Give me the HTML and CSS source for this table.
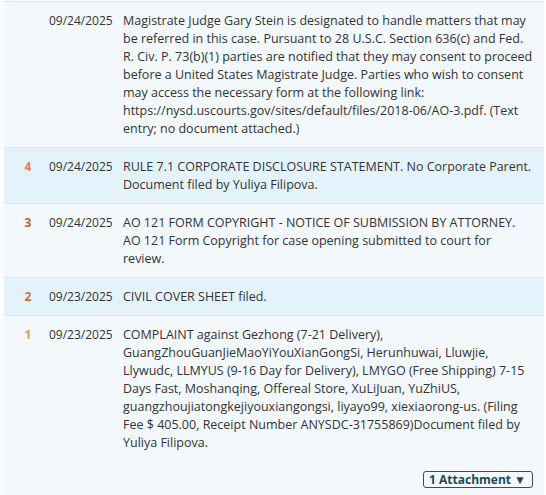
FILE: index.html
```html
<!DOCTYPE html>
<html lang="en">
<head>
    <meta charset="UTF-8">
    <meta name="viewport" content="width=device-width, initial-scale=1.0">
    <title>Docket Entries</title>
    <link rel="stylesheet" href="styles.css">
</head>
<body>
    <div class="docket">
        <div class="entry">
            <div class="entry-num"></div>
            <div class="entry-date">09/24/2025</div>
            <div class="entry-text">
                <p>Magistrate Judge Gary Stein is designated to handle matters that may be referred in this case. Pursuant to 28 U.S.C. Section 636(c) and Fed.<br>R. Civ. P. 73(b)(1) parties are notified that they may consent to proceed before a United States Magistrate Judge. Parties who wish to consent may access the necessary form at the following link: https://nysd.uscourts.gov/sites/default/files/2018-06/AO-3.pdf. (Text entry; no document attached.)</p>
            </div>
        </div>

        <div class="entry alt">
            <div class="entry-num num-4">4</div>
            <div class="entry-date">09/24/2025</div>
            <div class="entry-text">
                <p>RULE 7.1 CORPORATE DISCLOSURE STATEMENT. No Corporate Parent. Document filed by Yuliya Filipova.</p>
            </div>
        </div>

        <div class="entry">
            <div class="entry-num num-3">3</div>
            <div class="entry-date">09/24/2025</div>
            <div class="entry-text">
                <p>AO 121 FORM COPYRIGHT - NOTICE OF SUBMISSION BY ATTORNEY. AO 121 Form Copyright for case opening submitted to court for review.</p>
            </div>
        </div>

        <div class="entry alt">
            <div class="entry-num num-2">2</div>
            <div class="entry-date">09/23/2025</div>
            <div class="entry-text">
                <p>CIVIL COVER SHEET filed.</p>
            </div>
        </div>

        <div class="entry">
            <div class="entry-num num-1">1</div>
            <div class="entry-date">09/23/2025</div>
            <div class="entry-text">
                <p>COMPLAINT against Gezhong (7-21 Delivery), GuangZhouGuanJieMaoYiYouXianGongSi, Herunhuwai, Lluwjie, Llywudc, LLMYUS (9-16 Day for Delivery), LMYGO (Free Shipping) 7-15 Days Fast, Moshanqing, Offereal Store, XuLiJuan, YuZhiUS, guangzhoujiatongkejiyouxiangongsi, liyayo99, xiexiaorong-us. (Filing Fee $ 405.00, Receipt Number ANYSDC-31755869)Document filed by Yuliya Filipova.</p>
                <button class="attach-btn">1 Attachment &#9660;</button>
            </div>
        </div>
    </div>
</body>
</html>
```

FILE: styles.css
```css
body {
    font-family: 'Open Sans', 'Noto Sans', sans-serif;
    font-size: 12px;
    line-height: 18px;
    margin: 0;
    padding: 0;
    background-color: #fbfdfe;
    color: #333;
}
.docket {
    margin: 1px 2px 0 4px;
    border-top: 1px solid #d3e8f3;
}
.entry {
    display: grid;
    grid-template-columns: 32px 69px 1fr;
    column-gap: 5px;
    padding: 10px 6px 9px 8px;
    background-color: #f2f8fc;
    border-bottom: 1px solid #d3e8f3;
}
.entry.alt {
    background-color: #e4f3fb;
}
.entry-num {
    text-align: center;
    font-weight: bold;
}
.num-4 {
    color: #d9825a;
}
.num-3 {
    color: #c6622f;
}
.num-2 {
    color: #c7703f;
}
.num-1 {
    color: #d3a24c;
}
.entry-text {
    display: flex;
    flex-direction: column;
    font-size: 12.5px;
}
.entry-text p {
    margin: 0;
    max-width: 411px;
}
.attach-btn {
    align-self: flex-end;
    margin: 19px 5px 0 0;
    padding: 0 6px 0 5px;
    height: 17px;
    font-family: 'Open Sans', sans-serif;
    font-size: 12px;
    font-weight: bold;
    line-height: 15px;
    color: #1e4756;
    background-color: #f2f8fc;
    border: 1px solid #2a5464;
    border-radius: 3px;
    cursor: pointer;
}
```
